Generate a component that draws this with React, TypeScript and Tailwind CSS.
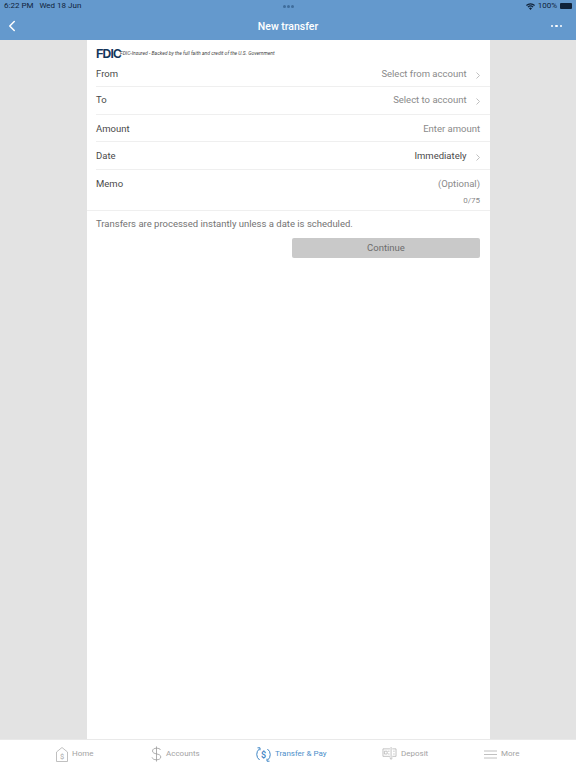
import { ChevronLeft } from "lucide-react"

const font = "font-['Roboto','Liberation_Sans',sans-serif]"

function HomeIcon() {
  return (
    <svg width="12" height="15" viewBox="0 0 12 15" fill="none" stroke="#b0b0b0" strokeWidth="0.8">
      <path d="M0.500 5 6 0.500 11.500 5v9.500H0.500z" />
      <text x="6" y="11.500" fontSize="7.500" textAnchor="middle" fill="#a8a8a8" stroke="none">$</text>
    </svg>
  )
}

function DollarIcon() {
  return (
    <svg width="11" height="16" viewBox="0 0 12 18" fill="none" stroke="#9a9a9a" strokeWidth="0.9">
      <path d="M6 0.500v17M10.500 4.500C10 3 8.300 2.500 6 2.500 3.500 2.500 1.500 3.600 1.500 5.600 1.500 10 10.800 7.800 10.800 12.300 10.800 14.400 8.700 15.500 6 15.500 3.300 15.500 1.500 14.500 1 12.800" />
    </svg>
  )
}

function TransferIcon() {
  return (
    <svg width="15" height="17" viewBox="0 0 15 17" fill="none" stroke="#3f86c6" strokeWidth="1">
      <path d="M3.500 2.800A7 7 0 0 0 3.600 14M11.500 14.200A7 7 0 0 0 11.400 3M1.500 1.800h2.500v2.500M13.500 15.200h-2.500v-2.500" />
      <text x="7.500" y="11.500" fontSize="9" fontWeight="600" textAnchor="middle" fill="#3f86c6" stroke="none">$</text>
    </svg>
  )
}

function DepositIcon() {
  return (
    <svg width="15" height="14" viewBox="0 0 15 15" fill="none" stroke="#b0b0b0" strokeWidth="0.8">
      <path d="M8 2H0.500v8H8M10.500 2H14.500v8H10.500M9.200 0v12M7.800 11.500l1.400 1.800 1.400-1.800" />
      <path d="M2 4.500h3v3H2zM6 4.500h1.500M6 7.500h1.500M11.500 4.500h1.500M11.500 7.500h1.500" />
    </svg>
  )
}

function MoreIcon() {
  return (
    <svg width="13" height="9" viewBox="0 0 13 9" fill="none" stroke="#b0b0b0" strokeWidth="0.8">
      <path d="M0 1h13M0 4.500h13M0 8h13" />
    </svg>
  )
}

function Chevron() {
  return (
    <svg width="4" height="7" viewBox="0 0 4 7" fill="none" stroke="#b8b8b8" strokeWidth="0.9" className="ml-[9px] mr-[0.500px] mt-[2px]">
      <path d="M0.500 0.500 3.500 3.500 0.500 6.500" />
    </svg>
  )
}

function Row({
  label,
  value,
  chevron,
  dark,
  className,
}: {
  label: string
  value: string
  chevron?: boolean
  dark?: boolean
  className: string
}) {
  return (
    <div className={`-mr-[9.500px] flex items-center justify-between border-b border-[#efefef] pr-[9.500px] ${className}`}>
      <span className="text-[#4a4a4a]">{label}</span>
      <span className={`flex items-center ${dark ? "text-[#4a4a4a]" : "text-[#8a8a8a]"}`}>
        {value}
        {chevron && <Chevron />}
      </span>
    </div>
  )
}

function Tab({
  icon,
  label,
  active,
  className,
}: {
  icon: React.ReactNode
  label: string
  active?: boolean
  className: string
}) {
  return (
    <div className={`absolute top-[5px] flex h-[18px] items-center ${className}`}>
      {icon}
      <span className={`ml-[4px] ${active ? "text-[#4d8fca]" : "text-[#a3a3a3]"}`}>{label}</span>
    </div>
  )
}

export default function App() {
  return (
    <div className={`flex h-[768px] w-[576px] flex-col overflow-hidden bg-[#e3e3e3] ${font}`}>
      {/* Header */}
      <div className="relative h-10 shrink-0 bg-[#6499cd] text-white">
        <div className="flex h-3 items-center justify-between px-[4px] text-[8px] text-[#10233a]">
          <span>6:22 PM&nbsp;&nbsp;&nbsp;Wed 18 Jun</span>
          <div className="flex items-center gap-[3px]">
            <svg width="9" height="7" viewBox="0 0 9 7" fill="#10233a">
              <path d="M4.500 7 3 5.300a2 2 0 0 1 3 0zM2.300 4.600l-.8-.9a4.300 4.300 0 0 1 6 0l-.8.9a3.200 3.200 0 0 0-4.400 0zM0.800 3 0 2.100a6.300 6.300 0 0 1 9 0L8.200 3a5.200 5.200 0 0 0-7.400 0z" />
            </svg>
            <span>100%</span>
            <div className="h-[5.500px] w-[12px] rounded-[1px] bg-[#10233a]" />
          </div>
        </div>
        <div className="absolute left-[283px] top-[5px] flex gap-[1.500px]">
          <div className="size-[2.500px] rounded-full bg-[#3f6d9c]" />
          <div className="size-[2.500px] rounded-full bg-[#3f6d9c]" />
          <div className="size-[2.500px] rounded-full bg-[#3f6d9c]" />
        </div>
        <div className="flex h-7 items-center justify-between pl-[3px] pr-[14px]">
          <ChevronLeft size={18} strokeWidth={2} />
          <span className="absolute left-0 right-0 top-[19px] text-center text-[10.500px] font-medium">New transfer</span>
          <div className="flex gap-[2px]">
            <div className="size-[2.500px] rounded-full bg-white" />
            <div className="size-[2.500px] rounded-full bg-white" />
            <div className="size-[2.500px] rounded-full bg-white" />
          </div>
        </div>
      </div>

      {/* Panel */}
      <div className="mx-auto w-[403px] flex-1 bg-white px-[9.500px] text-[9.500px]">
        <div className="flex h-[24px] items-center pt-[3px]">
          <span className="mr-[3px] w-[21px] font-['Liberation_Sans',sans-serif] text-[12px] font-bold leading-none tracking-[-0.8px] text-[#12355b]">FDIC</span>
          <span className="text-[5px] italic text-[#444444]">FDIC-Insured - Backed by the full faith and credit of the U.S. Government</span>
        </div>
        <Row label="From" value="Select from account" chevron className="h-[23px] pb-[2px]" />
        <Row label="To" value="Select to account" chevron className="h-[28px]" />
        <Row label="Amount" value="Enter amount" className="h-[27px] pt-[2px]" />
        <Row label="Date" value="Immediately" chevron dark className="h-[27.500px] pt-[2px]" />
        <div className="-mx-[9.500px] h-[41.500px] border-b border-[#efefef] px-[9.500px] pt-[7px]">
          <div className="flex justify-between">
            <span className="text-[#4a4a4a]">Memo</span>
            <span className="text-[#8a8a8a]">(Optional)</span>
          </div>
          <div className="mt-[4px] text-right text-[8px] text-[#8a8a8a]">0/75</div>
        </div>
        <p className="mt-[6px] text-[9.500px] text-[#737373]">Transfers are processed instantly unless a date is scheduled.</p>
        <div className="mt-[7px] flex justify-end">
          <div className="flex h-5 w-[188px] items-center justify-center rounded-[2px] bg-[#c9c9c9] text-[#6d6d6d]">Continue</div>
        </div>
      </div>

      {/* Tab bar */}
      <div className="relative h-[29px] shrink-0 border-t border-[#e9e9e9] bg-white text-[8px]">
        <Tab icon={<HomeIcon />} label="Home" className="left-[56px]" />
        <Tab icon={<DollarIcon />} label="Accounts" className="left-[151px]" />
        <Tab icon={<TransferIcon />} label="Transfer & Pay" active className="left-[256px]" />
        <Tab icon={<DepositIcon />} label="Deposit" className="left-[382px]" />
        <Tab icon={<MoreIcon />} label="More" className="left-[484px]" />
      </div>
    </div>
  )
}
